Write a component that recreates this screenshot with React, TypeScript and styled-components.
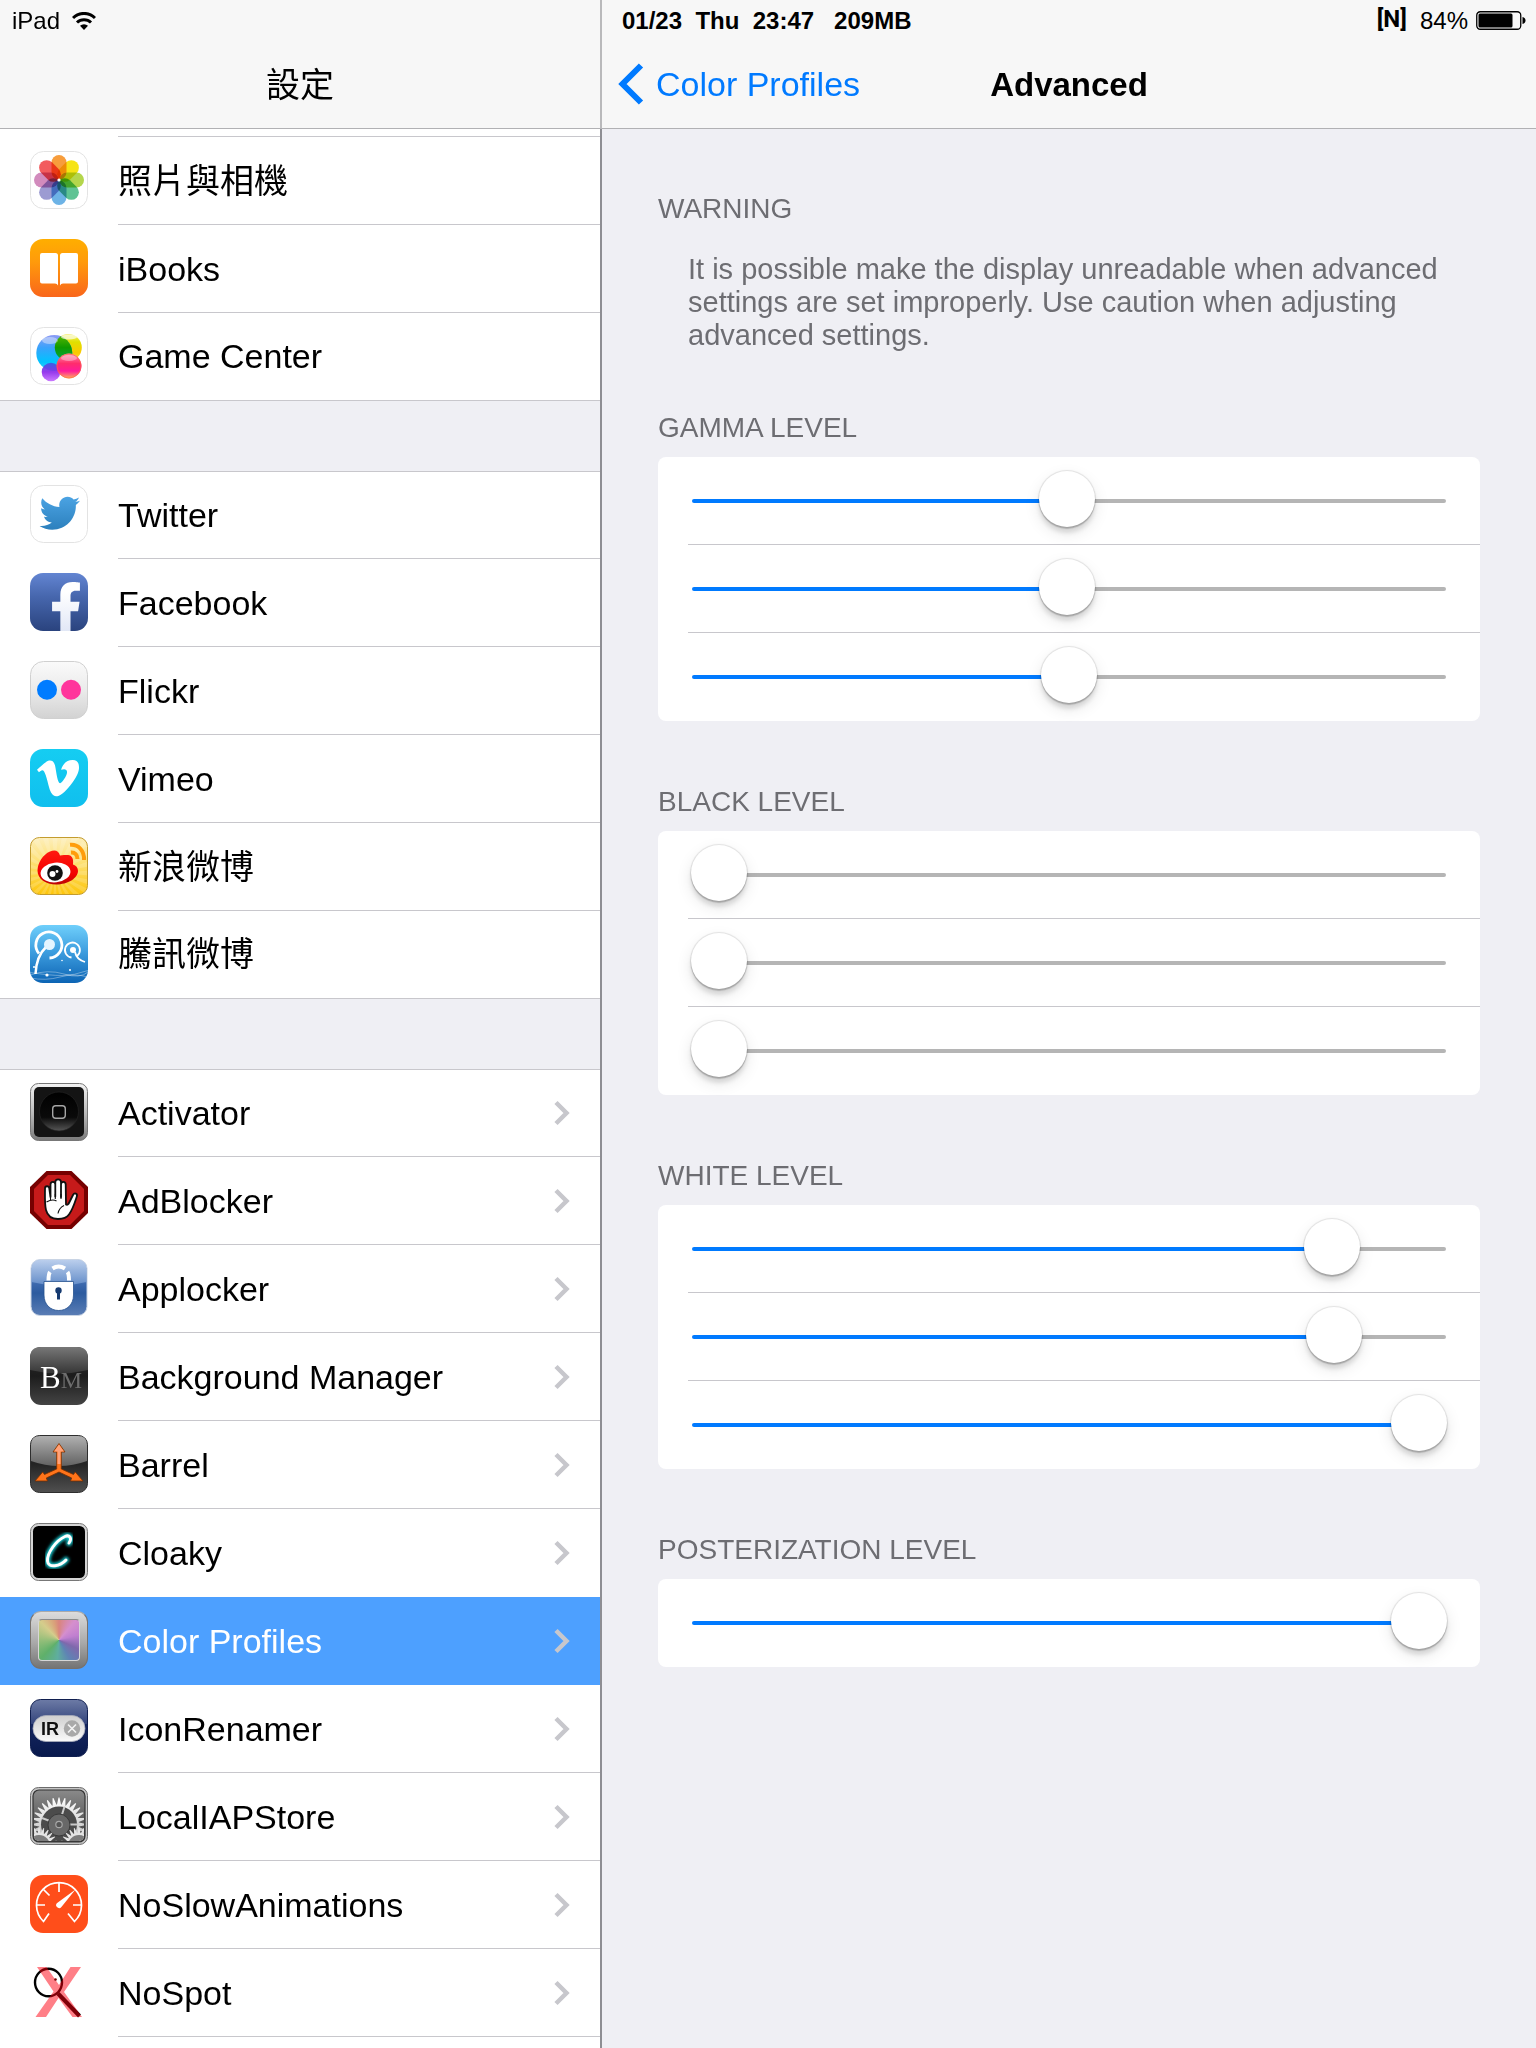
import React, { useState } from "react";
import styled, { createGlobalStyle, css } from "styled-components";
import { FaTwitter, FaFacebookF, FaVimeoV } from "react-icons/fa";

const colors = {
  bar: "#f7f7f7",
  group: "#efeff4",
  line: "#c8c7cc",
  tint: "#007aff",
  selected: "#4da0ff",
  muted: "#6d6d72",
  chevron: "#c7c7cc",
};

const GlobalStyle = createGlobalStyle`
  *, *::before, *::after { box-sizing: border-box; }
  body {
    margin: 0;
    background: ${colors.group};
    color: #000;
    font-family: "Liberation Sans", "Noto Sans CJK TC", sans-serif;
    font-size: 34px;
    line-height: 40px;
  }
  ul { list-style: none; margin: 0; padding: 0; }
  a { color: inherit; text-decoration: none; }
`;

/* ---------- layout ---------- */

const Screen = styled.div`
  display: grid;
  grid-template-columns: 602px minmax(0, 1fr);
  min-height: 100vh;
`;

const Sidebar = styled.aside`
  display: flex;
  flex-direction: column;
  background: #fff;
  border-right: 2px solid #8e8e93;
`;

const Detail = styled.main`
  display: flex;
  flex-direction: column;
`;

const Header = styled.header<{ $divided?: boolean }>`
  background: ${colors.bar};
  border-bottom: 1px solid #b1b1b4;
  ${(p) =>
    p.$divided &&
    css`
      margin-right: -2px;
      border-right: 2px solid #b9b9bb;
    `}
`;

const StatusBar = styled.div`
  display: flex;
  align-items: center;
  height: 40px;
  padding: 2px 10px 0 12px;
  font-size: 24px;
  line-height: 28px;
  white-space: pre;
`;

const StatusInfo = styled.span`
  flex: 1;
  padding-left: 8px;
  font-weight: 700;
`;

const Tweak = styled.span`
  margin-right: 13px;
  padding-bottom: 4px;
  font-family: Roboto, "Liberation Sans", sans-serif;
  font-weight: 700;
`;

const Percent = styled.span`
  margin-right: 8px;
`;

const WifiIcon = styled.svg`
  margin-left: 12px;
`;

const NavBar = styled.div`
  display: grid;
  grid-template-columns: minmax(0, 1fr) auto minmax(0, 1fr);
  align-items: center;
  height: 88px;
  padding: 0 16px;
`;

const Title = styled.h1`
  grid-column: 2;
  margin: 0;
  padding-top: 2px;
  font-size: 34px;
  font-weight: 400;
  line-height: 40px;
`;

const DetailTitle = styled(Title)`
  font-size: 33px;
  font-weight: 700;
`;

const BackLink = styled.a`
  display: flex;
  align-items: center;
  gap: 12px;
  color: ${colors.tint};
  white-space: nowrap;
`;

/* ---------- sidebar list ---------- */

const Groups = styled.nav`
  display: flex;
  flex: 1;
  flex-direction: column;
  gap: 70px;
  background: ${colors.group};
`;

const RowText = styled.span`
  display: flex;
  flex: 1;
  align-items: center;
  justify-content: space-between;
  padding-right: 29px;
  border-bottom: 1px solid ${colors.line};
  white-space: nowrap;
`;

const RowLink = styled.a<{ $selected?: boolean; $plain?: boolean }>`
  display: flex;
  height: 88px;
  padding-left: 30px;
  ${(p) =>
    p.$selected &&
    css`
      background: ${colors.selected};
      color: #fff;
    `}
  ${(p) =>
    p.$plain &&
    css`
      ${RowText} {
        border-color: transparent;
      }
    `}
`;

const Group = styled.ul<{ $first?: boolean; $last?: boolean }>`
  background: #fff;
  box-shadow: ${(p) => (p.$first ? "none" : `inset 0 1px ${colors.line}`)};
  flex: ${(p) => (p.$last ? "1" : "none")};
  ${(p) =>
    !p.$last &&
    css`
      & > li:last-child {
        border-bottom: 1px solid ${colors.line};
      }
      & > li:last-child > a {
        height: 87px;
      }
      & > li:last-child ${RowText} {
        border-color: transparent;
      }
    `}
`;

const RowIcon = styled.span`
  flex: none;
  width: 58px;
  height: 58px;
  margin: 14px 30px 0 0;
  svg { display: block; }
`;

const ScrolledRow = styled.div`
  height: 8px;
  margin-left: 118px;
  border-bottom: 1px solid ${colors.line};
`;

/* ---------- detail pane ---------- */

const Content = styled.div`
  display: flex;
  flex-direction: column;
  gap: 59px;
  padding: 63px 56px;
`;

const SectionTitle = styled.h2`
  margin: 0 0 12px;
  color: ${colors.muted};
  font-size: 28px;
  font-weight: 400;
  line-height: 34px;
`;

const Note = styled.p`
  margin: 0;
  padding: 15px 20px 0 30px;
  color: ${colors.muted};
  font-size: 29px;
  line-height: 33px;
`;

const Card = styled.div`
  margin-bottom: 5px;
  border-radius: 8px;
  background: #fff;
`;

const SliderRow = styled.div`
  display: grid;
  align-items: center;
  height: 88px;
  margin-left: 30px;
  padding: 0 33px 0 3px;
  &:not(:last-child) {
    box-shadow: inset 0 -1px ${colors.line};
  }
`;

const Track = styled.span`
  grid-area: 1 / 1;
  height: 4px;
  margin: 0 1px;
  border-radius: 2px;
`;

const Range = styled.input`
  grid-area: 1 / 1;
  width: 100%;
  height: 56px;
  margin: 0 0 4px;
  appearance: none;
  background: none;
  cursor: pointer;
  &::-webkit-slider-runnable-track {
    height: 56px;
    background: none;
  }
  &::-webkit-slider-thumb {
    appearance: none;
    width: 56px;
    height: 56px;
    border-radius: 50%;
    background: #fff;
    box-shadow: 0 0 1px 1px rgba(0, 0, 0, 0.1), 0 2px 1px rgba(0, 0, 0, 0.16),
      0 6px 4px rgba(0, 0, 0, 0.1), 0 6px 16px rgba(0, 0, 0, 0.1);
  }
`;

/* ---------- app icons ---------- */

const Svg = ({ children }: { children: React.ReactNode }) => (
  <svg width="58" height="58" viewBox="0 0 58 58" aria-hidden="true">
    {children}
  </svg>
);

const Gradient = ({ id, stops }: { id: string; stops: [number, string][] }) => (
  <linearGradient id={id} x1="0" y1="0" x2="0" y2="1">
    {stops.map(([at, color], i) => (
      <stop key={i} offset={at} stopColor={color} />
    ))}
  </linearGradient>
);

const Tile = ({ fill, stroke, r = 13 }: { fill: string; stroke?: string; r?: number }) => (
  <rect
    x={stroke ? 0.5 : 0}
    y={stroke ? 0.5 : 0}
    width={stroke ? 57 : 58}
    height={stroke ? 57 : 58}
    rx={r}
    fill={fill}
    stroke={stroke}
  />
);

const Petals = styled.g`
  isolation: isolate;
  rect { mix-blend-mode: multiply; }
`;

const petalColors = ["#f79d3c", "#f6e416", "#b4d64c", "#5fc394", "#6db3e6", "#9c9bd2", "#d28bbd", "#f25b5e"];

const PhotosIcon = () => (
  <Svg>
    <Tile fill="#fff" stroke="#e3e3e3" />
    <Petals>
      {petalColors.map((c, i) => (
        <rect key={c} x="21.5" y="4" width="15" height="24.5" rx="7.5" fill={c} transform={`rotate(${i * 45} 29 29)`} />
      ))}
    </Petals>
    <circle cx="29" cy="29" r="1.6" fill="#fff" />
  </Svg>
);

const IBooksIcon = () => (
  <Svg>
    <defs><Gradient id="ibooks" stops={[[0, "#ffae00"], [0.4, "#ff9a0b"], [1, "#f9661c"]]} /></defs>
    <Tile fill="url(#ibooks)" />
    <path d="M12 14h13.5q2.5 0 2.500 2.500V46.500q-.8-2-3-2H12q-2 0-2-2V16q0-2 2-2z" fill="#fff" />
    <path d="M46 14H32.500q-2.500 0-2.500 2.500V46.500q.8-2 3-2H46q2 0 2-2V16q0-2-2-2z" fill="#fff" />
  </Svg>
);

const GameCenterIcon = () => (
  <Svg>
    <defs>
      <Gradient id="gcBlue" stops={[[0, "#8f9cf5"], [0.35, "#3aa2fb"], [0.75, "#00c3ff"], [1, "#3ad0f5"]]} />
      <Gradient id="gcYellow" stops={[[0, "#f4f06a"], [0.3, "#dfe000"], [0.7, "#fbc800"], [1, "#ffd84a"]]} />
      <Gradient id="gcPink" stops={[[0, "#ff8fae"], [0.4, "#ff2d6c"], [0.7, "#ff1b9a"], [1, "#ffb05a"]]} />
      <Gradient id="gcPurple" stops={[[0, "#3f55e0"], [0.5, "#8a24ea"], [1, "#c56bff"]]} />
      <Gradient id="gcGreen" stops={[[0, "#5fb800"], [0.5, "#0f9a00"], [1, "#00a84a"]]} />
      <clipPath id="gcClip"><circle cx="24.3" cy="26" r="18" /></clipPath>
    </defs>
    <Tile fill="#fff" stroke="#e3e3e3" />
    <circle cx="38.3" cy="20.5" r="13.5" fill="url(#gcYellow)" />
    <circle cx="24.3" cy="26" r="18" fill="url(#gcBlue)" />
    <circle cx="38.3" cy="20.5" r="13.5" fill="url(#gcGreen)" clipPath="url(#gcClip)" />
    <circle cx="21" cy="45" r="9.3" fill="url(#gcPurple)" opacity=".9" />
    <circle cx="39" cy="39" r="12.5" fill="url(#gcPink)" />
    <circle cx="39" cy="39" r="12" fill="none" stroke="#ff6a3d" strokeOpacity=".6" />
    <ellipse cx="20" cy="13.5" rx="8" ry="3.5" fill="#fff" opacity=".4" />
    <ellipse cx="39" cy="10" rx="8" ry="2.5" fill="#fff" opacity=".65" />
    <ellipse cx="39" cy="31" rx="8" ry="3" fill="#fff" opacity=".35" />
  </Svg>
);

const TwitterIcon = () => (
  <Svg>
    <defs>
      <linearGradient id="tw" gradientUnits="userSpaceOnUse" x1="0" y1="48" x2="0" y2="464">
        <stop stopColor="#4ba3e3" />
        <stop offset="1" stopColor="#2c80bd" />
      </linearGradient>
    </defs>
    <Tile fill="#fff" stroke="#e3e3e3" />
    <FaTwitter x="9.5" y="8" size="40.5" fill="url(#tw)" />
  </Svg>
);

const FacebookIcon = () => (
  <Svg>
    <defs>
      <Gradient id="fb" stops={[[0, "#6385d2"], [0.4, "#4767ae"], [1, "#2a437e"]]} />
      <linearGradient id="fbF" gradientUnits="userSpaceOnUse" x1="0" y1="0" x2="0" y2="512">
        <stop offset=".2" stopColor="#fff" />
        <stop offset="1" stopColor="#dfe5f5" />
      </linearGradient>
    </defs>
    <Tile fill="url(#fb)" />
    <FaFacebookF x="10" y="9" size="52" fill="url(#fbF)" />
  </Svg>
);

const FlickrIcon = () => (
  <Svg>
    <defs><Gradient id="fl" stops={[[0, "#fafafa"], [0.5, "#ebebeb"], [1, "#d2d2d2"]]} /></defs>
    <Tile fill="url(#fl)" stroke="#d0d0d0" />
    <circle cx="17" cy="28.7" r="10" fill="#007cff" />
    <circle cx="41" cy="28.7" r="10" fill="#ff359c" />
  </Svg>
);

const VimeoIcon = () => (
  <Svg>
    <defs><Gradient id="vi" stops={[[0, "#15cdf2"], [1, "#10bfee"]]} /></defs>
    <Tile fill="url(#vi)" />
    <FaVimeoV x="4" y="5" size="48" fill="#fff" />
  </Svg>
);

const WeiboIcon = () => (
  <Svg>
    <defs>
      <Gradient id="wb" stops={[[0, "#fdeebb"], [0.45, "#fde070"], [1, "#fdc50a"]]} />
      <Gradient id="wbRed" stops={[[0, "#ff1a10"], [0.7, "#f30000"], [1, "#b90606"]]} />
      <clipPath id="wbClip"><rect x="1" y="1" width="56" height="56" rx="8" /></clipPath>
    </defs>
    <Tile fill="url(#wb)" stroke="#c39c2e" r={9} />
    <g clipPath="url(#wbClip)">
      {Array.from({ length: 24 }, (_, i) => (
        <path key={i} d="M25 36L67 33v6z" fill="#fff" opacity=".16" transform={`rotate(${i * 15} 25 36)`} />
      ))}
    </g>
    <path d="M30 18.500c-1.500-5-5-6-10-4C13 17.500 7.500 26 7.500 33.500 7.500 42 16 47.500 26 47.500c12 0 22-6.500 22-13.500 0-3.500-2-5.500-5-6.500 .8-6-1-9-5-9.500-3 0-5 0-8 .5z" fill="url(#wbRed)" />
    <ellipse cx="25.5" cy="35.5" rx="15" ry="9.8" fill="#fff" transform="rotate(-6 25.5 35.5)" />
    <circle cx="25" cy="36" r="7.8" fill="#111" />
    <circle cx="22.5" cy="37" r="3" fill="#fff" />
    <circle cx="27" cy="34.5" r="1.4" fill="#fff" />
    <path d="M40 7.800C48.500 7 54.500 14 54 23M41 15.500c4-.2 6.500 2.500 6.500 6.500" fill="none" stroke="#ff9d0a" strokeWidth="4" />
  </Svg>
);

const TencentIcon = () => (
  <Svg>
    <defs>
      <Gradient id="tx" stops={[[0, "#6fcffb"], [0.45, "#3f9fe0"], [1, "#0c64b4"]]} />
      <clipPath id="txClip"><rect width="58" height="58" rx="13" /></clipPath>
    </defs>
    <Tile fill="url(#tx)" />
    <g clipPath="url(#txClip)" fill="none" stroke="#fff">
      <path d="M5.500 49C6 38 9 28.500 16.500 21.500" strokeWidth="2.5" />
      <path d="M9 28.500A13 13 0 1 1 19.500 33" strokeWidth="2.8" />
      <path d="M47 31A7.500 7.500 0 1 0 41.500 32.500M45 27c1 5 5 8.500 10 10" strokeWidth="1.8" />
      <path d="M0 50q18-6 34-1t24-2M0 53q16 3 30-1t28 0M0 47.500q20 3 32 3t26-5" strokeWidth=".7" opacity=".5" />
    </g>
    <circle cx="19.5" cy="19.5" r="5.5" fill="#e4f5ff" />
    <circle cx="43" cy="25" r="3" fill="#fff" />
    <g fill="#fff">
      <circle cx="17" cy="50" r="1.6" />
      <circle cx="32" cy="35.5" r=".8" />
      <circle cx="40" cy="45" r="1" />
      <circle cx="4" cy="42" r="1" />
    </g>
  </Svg>
);

const ActivatorIcon = () => (
  <Svg>
    <defs>
      <Gradient id="acFrame" stops={[[0, "#f4f4f4"], [0.5, "#bdbdbd"], [1, "#7b7b7b"]]} />
      <Gradient id="acDisc" stops={[[0, "#000"], [0.65, "#0a0a0a"], [1, "#565656"]]} />
    </defs>
    <Tile fill="url(#acFrame)" stroke="#777" r={8} />
    <rect x="4" y="4" width="50" height="50" rx="5" fill="#141414" />
    <circle cx="29" cy="28.5" r="19.5" fill="url(#acDisc)" stroke="#222" strokeWidth=".7" />
    <rect x="22.7" y="22.7" width="12.6" height="12.6" rx="3" fill="none" stroke="#a6a6a6" strokeWidth="1.4" />
  </Svg>
);

const AdBlockerIcon = () => (
  <Svg>
    <path d="M16.500 0h25L58 16v26L41.500 58h-25L0 42V16z" fill="#760000" />
    <path d="M18 4h22L54 18v22L40 54H18L4 40V18z" fill="#c61a1a" />
    <path
      d="M16 39C14.500 33 15 24 15 17.500c0-3 4-3 4.300 0L20.500 26V13.500c0-3.500 4.800-3.500 4.800 0V25.500 11c0-3.500 5.700-3.500 5.700 0v15V13.500c0-3.500 4.700-3.500 4.700 0L36 33.500c1.500 1 2.500-.5 3.500-2.500l3.500-7c1.500-2.800 4.800-1.500 3.800 1.500C45 31 43 38 39 43.500c-2 3-6 4.500-11 4.500-7 0-10.500-3-12-9z"
      fill="#fff"
      stroke="#111"
      strokeWidth="1.8"
      strokeLinejoin="round"
    />
    <path d="M20.500 24v5M25.300 23v5M31 23v5M16.500 31q6-3.500 10-1M28 42.500q1-5.500 6-8" fill="none" stroke="#111" strokeWidth="1.1" />
  </Svg>
);

const ApplockerIcon = () => (
  <Svg>
    <defs>
      <Gradient id="al" stops={[[0, "#8fafdd"], [0.45, "#3a67ac"], [0.6, "#2c5b9f"], [1, "#5a7db5"]]} />
      <Gradient id="alGloss" stops={[[0, "#c9d9f2"], [1, "#7199d2"]]} />
    </defs>
    <rect x="1" y="0.5" width="56" height="56" rx="9" fill="url(#al)" stroke="#c9d4e4" />
    <path d="M1.500 10q0-9 9-9h37q9 0 9 9v13q-27.500 7-55 0z" fill="url(#alGloss)" opacity=".75" />
    <path d="M18.500 21.500c0-5 .3-7 1.500-8.500M22.500 9.500q6-4 12.500 0M37.500 13c1.200 1.500 1.500 3.500 1.500 8.500" fill="none" stroke="#fff" strokeWidth="4" />
    <path d="M14 22.500h29.500V36C43.500 45.500 37 51.500 28.700 51.500S14 45.500 14 36z" fill="#fff" stroke="#24508e" strokeWidth=".8" />
    <circle cx="28.5" cy="31.5" r="3.2" fill="#163a70" />
    <rect x="27" y="32" width="3" height="8.5" fill="#163a70" />
  </Svg>
);

const BackgroundManagerIcon = () => (
  <Svg>
    <defs>
      <Gradient id="bm" stops={[[0, "#2c2c2c"], [0.5, "#1c1c1c"], [1, "#444"]]} />
      <Gradient id="bmGloss" stops={[[0, "#777"], [1, "#363636"]]} />
    </defs>
    <Tile fill="url(#bm)" r={11} />
    <path d="M0 11Q0 0 11 0h36q11 0 11 11v12q-29 7-58 0z" fill="url(#bmGloss)" />
    <text x="10" y="41" fontFamily="Liberation Serif, serif" fontSize="31" fill="#fff">
      B
      <tspan fontSize="24" fill="#6e6e6e">M</tspan>
    </text>
  </Svg>
);

const BarrelIcon = () => (
  <Svg>
    <defs>
      <Gradient id="ba" stops={[[0, "#333"], [0.5, "#242424"], [1, "#505050"]]} />
      <Gradient id="baGloss" stops={[[0, "#b0b0b0"], [1, "#626262"]]} />
    </defs>
    <Tile fill="url(#ba)" stroke="#2e2e2e" r={9} />
    <path d="M1 10q0-9 9-9h38q9 0 9 9v16q-28 10-56 0z" fill="url(#baGloss)" />
    <path d="M29 8.500l6 8.500h-3.700V34l12.200 5.500 1.800-2.500L53 46H40.500l1.200-3L29 37l-12.700 6 1.200 3H5l7.700-9 1.800 2.500L26.700 34V17H23z" fill="#ff741a" stroke="#7a2e00" strokeWidth=".8" />
    <path d="M29 9.500l5 7h-3.500V29h-3V16.500H24z" fill="#ffa27a" />
  </Svg>
);

const CloakyIcon = () => (
  <Svg>
    <defs><filter id="glow"><feGaussianBlur stdDeviation="1.5" /></filter></defs>
    <Tile fill="#d4d4d4" stroke="#777" r={8} />
    <rect x="3" y="3" width="52" height="52" rx="5.5" fill="#000" />
    <g fill="none" strokeLinecap="round">
      <path d="M39 20c3.500-5 .5-8.500-4-6.500C26 17.500 17 30 17.500 38c.5 8 13 5 18.500-1" stroke="#12c7cf" strokeWidth="6" filter="url(#glow)" />
      <path d="M39 20c3.500-5 .5-8.500-4-6.500C26 17.500 17 30 17.500 38c.5 8 13 5 18.500-1" stroke="#fff" strokeWidth="3" />
    </g>
  </Svg>
);

const ProfileFrame = styled.span`
  display: block;
  width: 58px;
  height: 58px;
  padding: 7px;
  border: 1px solid #77716c;
  border-top-color: #aaa;
  border-radius: 11px;
  background: linear-gradient(#dcdcdc, #a9a9a9 55%, #747474);
`;

const ProfileWheel = styled.span`
  display: block;
  height: 42px;
  border: 1px solid #d6d6d6;
  border-top-color: #8a8a8a;
  border-radius: 4px;
  background: conic-gradient(#d9857e, #d58fce 40deg, #c07fd0 75deg, #7f68ac 115deg, #5f83b4 150deg,
    #5fae9f 185deg, #5fb06a 225deg, #8fbd78 265deg, #d5cd8c 315deg, #d9a07a 345deg, #d9857e);
`;

const ColorProfilesIcon = () => (
  <ProfileFrame>
    <ProfileWheel />
  </ProfileFrame>
);

const IconRenamerIcon = () => (
  <Svg>
    <defs>
      <Gradient id="ir" stops={[[0, "#6d7ba6"], [0.42, "#34457c"], [0.43, "#152660"], [1, "#08194c"]]} />
      <Gradient id="irPill" stops={[[0, "#cfcfcf"], [1, "#fafafa"]]} />
    </defs>
    <Tile fill="url(#ir)" stroke="#101f50" r={10} />
    <rect x="3" y="16.5" width="52" height="26" rx="13" fill="url(#irPill)" stroke="#a9adbb" strokeWidth=".8" />
    <text x="11" y="36" fontFamily="Liberation Sans, sans-serif" fontWeight="700" fontSize="18" fill="#111">IR</text>
    <circle cx="42" cy="29.5" r="8.2" fill="#a9a9a9" />
    <path d="M38 25.500l8 8M46 25.500l-8 8" stroke="#f4f4f4" strokeWidth="1.6" />
  </Svg>
);

const gearPath = (cx: number, cy: number, outer: number, inner: number, teeth: number) => {
  const step = (Math.PI * 2) / teeth;
  const at = (r: number, a: number) => `${(cx + r * Math.cos(a)).toFixed(2)} ${(cy + r * Math.sin(a)).toFixed(2)}`;
  const tooth = (i: number) =>
    [at(inner, (i - 0.45) * step), at(outer, (i - 0.08) * step), at(outer, (i + 0.08) * step), at(inner, (i + 0.45) * step)].join("L");
  return `M${Array.from({ length: teeth }, (_, i) => tooth(i)).join("L")}Z`;
};

const LocalIAPStoreIcon = () => (
  <Svg>
    <defs>
      <Gradient id="li" stops={[[0, "#8a8a8a"], [1, "#3d3d3d"]]} />
      <Gradient id="liGear" stops={[[0, "#fff"], [1, "#a8a8a8"]]} />
      <clipPath id="liClip"><rect x="4" y="4" width="50" height="50" rx="5" /></clipPath>
    </defs>
    <Tile fill="#c4c4c4" stroke="#6c6c6c" r={8} />
    <rect x="3" y="3" width="52" height="52" rx="6" fill="url(#li)" stroke="#333" strokeWidth="1.2" />
    <g clipPath="url(#liClip)">
      <path d={gearPath(29, 37.5, 27, 20, 28)} fill="url(#liGear)" />
      <circle cx="29" cy="37.5" r="18" fill="#4b4b4b" />
      <path d="M29 37.500L34.500 19.500M29 37.500H48M29 37.500L12 31" stroke="#c9c9c9" strokeWidth="2" />
      <circle cx="29" cy="38" r="11" fill="#686868" stroke="#3a3a3a" />
      <path d={gearPath(9, 59, 18.5, 13, 24)} fill="#e4e4e4" />
      <path d={gearPath(49, 59, 18.5, 13, 24)} fill="#e4e4e4" />
      <circle cx="9" cy="59" r="11" fill="#7c7c7c" />
      <circle cx="49" cy="59" r="11" fill="#7c7c7c" />
      <circle cx="29" cy="37.5" r="3.2" fill="#555" stroke="#a8a8a8" strokeWidth="1.2" />
    </g>
  </Svg>
);

const NoSlowIcon = () => (
  <Svg>
    <Tile fill="#ff4e1a" />
    <g fill="none" stroke="#fff" strokeWidth="1.7">
      <path d="M19 38.500L13.500 46.500A22.500 22.500 0 1 1 44.500 46.500L38 38.500" />
      <path d="M29 8v9M7 30h8M51 30h-8M13.500 14.500l6 6" />
    </g>
    <path d="M45.500 14.500L31.800 31.500A3 3 0 1 1 26.800 28.200z" fill="#fff" />
  </Svg>
);

const NoSpotIcon = () => (
  <Svg>
    <path d="M28 30.500L49.500 53" stroke="#000" strokeWidth="4" />
    <ellipse cx="18.5" cy="19.5" rx="13.5" ry="13.8" fill="none" stroke="#000" strokeWidth="2.4" />
    <path d="M7 4h9.500L29 22 40.500 4H51L34 29 52 54H42.500L28.500 35 16 54H5.500L23.500 28.500z" fill="#ff000f" opacity=".5" />
    <circle cx="25.5" cy="16.5" r="1.3" fill="#700" />
  </Svg>
);

/* ---------- data ---------- */

type Item = { label: string; icon: React.ComponentType; chevron?: boolean; selected?: boolean; plain?: boolean };

const mediaItems: Item[] = [
  { label: "照片與相機", icon: PhotosIcon },
  { label: "iBooks", icon: IBooksIcon },
  { label: "Game Center", icon: GameCenterIcon },
];

const socialItems: Item[] = [
  { label: "Twitter", icon: TwitterIcon },
  { label: "Facebook", icon: FacebookIcon },
  { label: "Flickr", icon: FlickrIcon },
  { label: "Vimeo", icon: VimeoIcon },
  { label: "新浪微博", icon: WeiboIcon },
  { label: "騰訊微博", icon: TencentIcon },
];

const tweakItems: Item[] = [
  { label: "Activator", icon: ActivatorIcon },
  { label: "AdBlocker", icon: AdBlockerIcon },
  { label: "Applocker", icon: ApplockerIcon },
  { label: "Background Manager", icon: BackgroundManagerIcon },
  { label: "Barrel", icon: BarrelIcon },
  { label: "Cloaky", icon: CloakyIcon, plain: true },
  { label: "Color Profiles", icon: ColorProfilesIcon, selected: true, plain: true },
  { label: "IconRenamer", icon: IconRenamerIcon },
  { label: "LocalIAPStore", icon: LocalIAPStoreIcon },
  { label: "NoSlowAnimations", icon: NoSlowIcon },
  { label: "NoSpot", icon: NoSpotIcon },
].map((item) => ({ ...item, chevron: true }));

const sliderSections = [
  { title: "GAMMA LEVEL", values: [497, 497, 500] },
  { title: "BLACK LEVEL", values: [0, 0, 0] },
  { title: "WHITE LEVEL", values: [876, 879, 1000] },
  { title: "POSTERIZATION LEVEL", values: [1000] },
];

/* ---------- components ---------- */

const Chevron = () => (
  <svg width="18" height="26" viewBox="0 0 18 26" aria-hidden="true">
    <path d="M3 2.500L13.500 13 3 23.500" fill="none" stroke={colors.chevron} strokeWidth="4.5" />
  </svg>
);

const Row = ({ label, icon: Icon, chevron, selected, plain }: Item) => (
  <li>
    <RowLink href="#" $selected={selected} $plain={plain} aria-current={selected ? "page" : undefined}>
      <RowIcon>
        <Icon />
      </RowIcon>
      <RowText>
        {label}
        {chevron && <Chevron />}
      </RowText>
    </RowLink>
  </li>
);

const Slider = ({ name, initial }: { name: string; initial: number }) => {
  const [value, setValue] = useState(initial);
  const percent = value / 10;
  return (
    <SliderRow>
      <Track style={{ background: `linear-gradient(to right, ${colors.tint} ${percent}%, #b5b5b5 ${percent}%)` }} />
      <Range
        type="range"
        min={0}
        max={1000}
        value={value}
        aria-label={name}
        onChange={(e) => setValue(Number(e.target.value))}
      />
    </SliderRow>
  );
};

export default function App() {
  return (
    <>
      <GlobalStyle />
      <Screen>
        <Sidebar>
          <Header $divided>
            <StatusBar>
              <span>iPad</span>
              <WifiIcon width="24" height="18" viewBox="0 0 24 18" aria-hidden="true">
                <g fill="none" stroke="#000" strokeWidth="3">
                  <path d="M1 6A15.500 15.500 0 0 1 23 6" />
                  <path d="M5 10.500A10 10 0 0 1 19 10.500" />
                </g>
                <path d="M12 18L8 13.800A6 6 0 0 1 16 13.800z" />
              </WifiIcon>
            </StatusBar>
            <NavBar>
              <Title>設定</Title>
            </NavBar>
          </Header>
          <Groups aria-label="設定">
            <Group $first>
              <li aria-hidden="true">
                <ScrolledRow />
              </li>
              {mediaItems.map((item) => (
                <Row key={item.label} {...item} />
              ))}
            </Group>
            <Group>
              {socialItems.map((item) => (
                <Row key={item.label} {...item} />
              ))}
            </Group>
            <Group $last>
              {tweakItems.map((item) => (
                <Row key={item.label} {...item} />
              ))}
            </Group>
          </Groups>
        </Sidebar>
        <Detail>
          <Header>
            <StatusBar>
              <StatusInfo>{"01/23  Thu  23:47   209MB"}</StatusInfo>
              <Tweak>[N]</Tweak>
              <Percent>84%</Percent>
              <svg width="50" height="20" viewBox="0 0 50 20" aria-hidden="true">
                <rect x="0.75" y="0.75" width="44" height="17.5" rx="3.5" fill="none" stroke="#000" strokeWidth="1.3" />
                <rect x="2.5" y="2.5" width="34" height="14" rx="1.5" />
                <path d="M46.500 6q3 .8 3 3.500t-3 3.500z" />
              </svg>
            </StatusBar>
            <NavBar>
              <BackLink href="#">
                <svg width="26" height="42" viewBox="0 0 26 42" aria-hidden="true">
                  <path d="M23 2.500L4.500 21 23 39.500" fill="none" stroke={colors.tint} strokeWidth="6" />
                </svg>
                Color Profiles
              </BackLink>
              <DetailTitle>Advanced</DetailTitle>
            </NavBar>
          </Header>
          <Content>
            <section>
              <SectionTitle>WARNING</SectionTitle>
              <Note>
                It is possible make the display unreadable when advanced settings are set improperly. Use caution when
                adjusting advanced settings.
              </Note>
            </section>
            {sliderSections.map(({ title, values }) => (
              <section key={title}>
                <SectionTitle>{title}</SectionTitle>
                <Card>
                  {values.map((v, i) => (
                    <Slider key={i} name={`${title} ${i + 1}`} initial={v} />
                  ))}
                </Card>
              </section>
            ))}
          </Content>
        </Detail>
      </Screen>
    </>
  );
}
